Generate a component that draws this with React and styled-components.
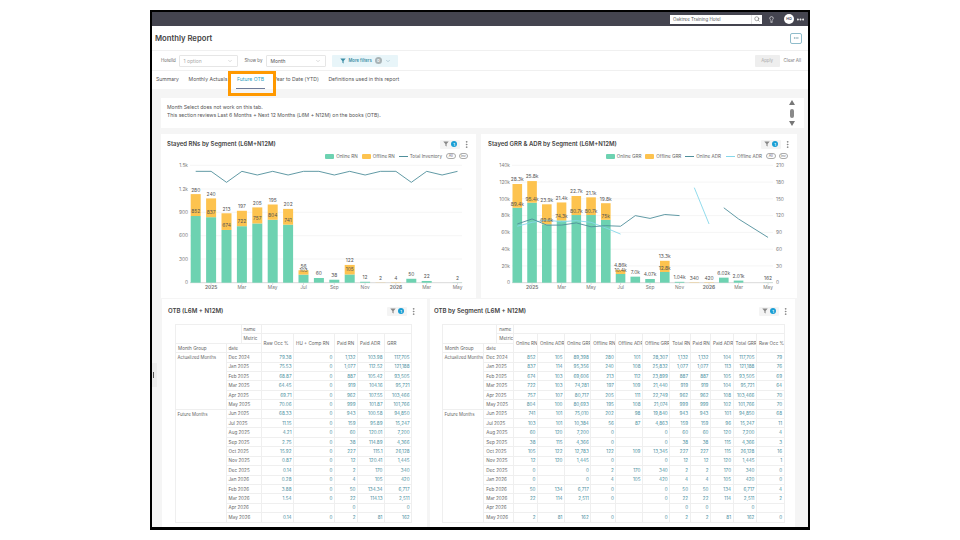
import styled, { createGlobalStyle } from "styled-components"
import { ChevronDown, Ellipsis, EllipsisVertical, Lightbulb, Search } from "lucide-react"

const GREEN = "#6dd2b1"
const ORANGE = "#fdc34f"
const DARK_LINE = "#4f8f9b"
const LIGHT_LINE = "#86d7ea"

const GlobalStyle = createGlobalStyle`
  html, body { margin: 0; padding: 0; background: #fff; }
  body { font-family: Inter, "Liberation Sans", sans-serif; color: #555; }
`
const Page = styled.div`
  width: 960px;
  height: 540px;
  box-sizing: border-box;
  padding: 10px 150px 0;
  overflow: hidden;
  background: #fff;
`
const Frame = styled.div`
  position: relative;
  width: 660px;
  height: 520px;
  box-sizing: border-box;
  border: 2px solid #000;
  border-bottom-width: 3px;
  overflow: hidden;
  display: flex;
  flex-direction: column;
  background: #fff;
`
const TopBar = styled.div`
  height: 14px;
  flex: none;
  background: #44444f;
  display: flex;
  align-items: center;
  justify-content: flex-end;
  padding-right: 3px;
  color: #fff;
`
const SearchBox = styled.div`
  width: 92px;
  height: 9px;
  box-sizing: border-box;
  background: #fff;
  display: flex;
  align-items: center;
  justify-content: space-between;
  padding-left: 3px;
  font-size: 4.5px;
  color: #555;
  margin-right: 6px;
`
const SearchIconCell = styled.div`
  width: 10px;
  height: 9px;
  border-left: 1px solid #e4e4e4;
  display: flex;
  align-items: center;
  justify-content: center;
`
const Avatar = styled.div`
  width: 10px;
  height: 10px;
  border-radius: 50%;
  background: #fff;
  color: #44444f;
  font-size: 3.6px;
  font-weight: 600;
  display: flex;
  align-items: center;
  justify-content: center;
  margin: 0 2px 0 9px;
`
const TitleRow = styled.div`
  height: 24px;
  flex: none;
  display: flex;
  align-items: center;
  justify-content: space-between;
  padding: 0 6px 0 3px;
  border-bottom: 1px solid #f0f0f0;
`
const PageTitle = styled.div`
  font-size: 7.7px;
  font-weight: 600;
  color: #444;
`
const SquareButton = styled.div`
  width: 12px;
  height: 11px;
  box-sizing: border-box;
  border: 1px solid #8fbccb;
  border-radius: 2px;
  display: flex;
  align-items: center;
  justify-content: center;
  color: #5d8d9b;
`
const FilterRow = styled.div`
  height: 19px;
  flex: none;
  display: flex;
  align-items: center;
  padding: 0 7px 0 9px;
  border-bottom: 1px solid #f0f0f0;
  font-size: 4.4px;
  color: #666;
`
const FilterLabel = styled.span`
  width: ${(p) => p.$width}px;
  flex: none;
`
const SelectBox = styled.div`
  width: ${(p) => p.$width}px;
  height: 12px;
  box-sizing: border-box;
  border: 1px solid #e6e6e6;
  border-radius: 1px;
  display: flex;
  align-items: center;
  justify-content: space-between;
  padding: 0 4px;
  margin-right: ${(p) => p.$gap}px;
  font-size: 5px;
  color: ${(p) => (p.$muted ? "#aaa" : "#555")};
`
const MoreFilters = styled.div`
  width: 66px;
  height: 12px;
  box-sizing: border-box;
  background: #e8f5f9;
  border-radius: 1px;
  display: flex;
  align-items: center;
  gap: 3px;
  padding-left: 8px;
  font-size: 4.2px;
  font-weight: 600;
  color: #3b8da5;
`
const ZeroBadge = styled.span`
  width: 7px;
  height: 7px;
  border-radius: 50%;
  background: #a9b3b6;
  color: #fff;
  font-size: 4px;
  display: flex;
  align-items: center;
  justify-content: center;
`
const ApplyButton = styled.div`
  margin-left: auto;
  width: 25px;
  height: 12px;
  background: #eee;
  border-radius: 1px;
  display: flex;
  align-items: center;
  justify-content: center;
  color: #aaa;
`
const ClearAll = styled.span`
  margin-left: 4px;
  color: #777;
`
const TabBar = styled.div`
  position: relative;
  z-index: 2;
  height: 18px;
  flex: none;
  display: flex;
  align-items: center;
  gap: 9.6px;
  padding-left: 4px;
  font-size: 5.1px;
  color: #555;
`
const Tab = styled.div`
  position: relative;
  height: 18px;
  line-height: 17px;
  color: ${(p) => (p.$active ? "#2e9fc0" : "#555")};
`
const TabUnderline = styled.div`
  position: absolute;
  left: -1px;
  right: -1px;
  bottom: 0;
  height: 1px;
  background: #6d7a98;
`
const Highlight = styled.div`
  position: absolute;
  left: 76px;
  top: 0;
  width: 48px;
  height: 25px;
  box-sizing: border-box;
  border: 3px solid #f90;
`
const Content = styled.div`
  flex: 1;
  min-height: 0;
  background: #f5f5f5;
  padding: 9px 11px 0 9px;
  position: relative;
`
const InfoCard = styled.div`
  height: 30px;
  box-sizing: border-box;
  background: #fff;
  margin-right: -7px;
  padding: 5px 6px;
  font-size: 5.1px;
  line-height: 8px;
  color: #555;
  display: flex;
  justify-content: space-between;
`
const ScrollTrack = styled.div`
  width: 6px;
  height: 26px;
  margin: -3px 3px 0 0;
  display: flex;
  flex-direction: column;
  align-items: center;
  justify-content: space-between;
`
const ScrollThumb = styled.div`
  width: 4px;
  height: 9px;
  border-radius: 2px;
  background: #8a8a8a;
`
const ChartRow = styled.div`
  display: grid;
  grid-template-columns: 315px 316px;
  gap: 5px;
  margin-top: 6px;
`
const Card = styled.div`
  background: #fff;
  overflow: hidden;
`
const CardHead = styled.div`
  height: ${(p) => p.$height}px;
  display: flex;
  align-items: center;
  justify-content: space-between;
  padding: 0 ${(p) => p.$right}px 0 ${(p) => p.$left}px;
  box-sizing: border-box;
`
const CardTitle = styled.div`
  font-size: ${(p) => p.$size}px;
  font-weight: 600;
  color: #444;
`
const CardTools = styled.div`
  display: flex;
  align-items: center;
  gap: 2px;
  margin-top: 2px;
  color: #777;
`
const FilterChip = styled.div`
  width: 20px;
  height: 9px;
  background: #f4f4f4;
  border-radius: 1px;
  display: flex;
  align-items: center;
  justify-content: center;
  gap: 2px;
`
const CountBadge = styled.span`
  width: 6px;
  height: 6px;
  border-radius: 50%;
  background: #1a9ed4;
  color: #fff;
  font-size: 4px;
  font-weight: 600;
  display: flex;
  align-items: center;
  justify-content: center;
`
const Legend = styled.div`
  height: 8px;
  display: flex;
  align-items: center;
  justify-content: flex-end;
  padding-right: ${(p) => p.$right}px;
  font-size: 4.6px;
  color: #666;
`
const LegendItem = styled.div`
  display: flex;
  align-items: center;
  gap: 2px;
  margin-right: ${(p) => p.$gap}px;
`
const Swatch = styled.span`
  width: 9px;
  height: 5px;
  border-radius: 1px;
  background: ${(p) => p.$color};
`
const LineMark = styled.span`
  width: 9px;
  height: 1px;
  background: ${(p) => p.$color};
`
const Pill = styled.span`
  width: 9.5px;
  height: 6px;
  box-sizing: border-box;
  border: 0.6px solid #aaa;
  border-radius: 4px;
  margin-left: 3px;
  font-size: 3.6px;
  display: flex;
  align-items: center;
  justify-content: center;
`
const ChartSvg = styled.svg`
  display: block;
  width: ${(p) => p.$width}px;
  height: 138px;
`
const AxisText = styled.text`
  font-size: 4.8px;
  fill: #777;
  font-weight: ${(p) => (p.$bold ? 700 : 400)};
`
const BarLabel = styled.text`
  font-size: 4.9px;
  fill: #555;
  text-anchor: middle;
`
const TableRow = styled.div`
  display: grid;
  grid-template-columns: 265px 365px;
  gap: 3px;
  margin: 1px 0 0 1px;
`
const TableCard = styled(Card)`
  height: 232px;
`
const TableWrap = styled.div`
  margin: 3px 0 0 ${(p) => p.$left}px;
`
const DataTable = styled.table`
  table-layout: fixed;
  border-collapse: collapse;
  width: ${(p) => p.$width}px;
  font-size: 4.6px;
  color: #666;
  td, th {
    height: 9.41px;
    padding: 0 1.5px 0 2px;
    border: 1px solid #efefef;
    box-sizing: border-box;
    line-height: 5px;
    font-weight: 400;
    text-align: left;
    white-space: nowrap;
    overflow: hidden;
  }
`
const GroupCell = styled.td`
  && {
    vertical-align: top;
    padding: 2px 0 0 1.5px;
    font-size: 4.4px;
  }
`
const ValueCell = styled.td`
  && {
    text-align: right;
    color: #4a8fa0;
  }
`
const Handle = styled.div`
  position: absolute;
  left: 0;
  top: 274px;
  width: 5px;
  height: 24px;
  background: #ececec;
  display: flex;
  align-items: center;
`
const HandleTick = styled.span`
  width: 1px;
  height: 6px;
  margin-left: 1px;
  background: #555;
`

const rnX = (i) => 195.7 + 15.4 * i
const grrX = (i) => 517.3 + 14.75 * i
const rnY = (v) => 282.7 - (v / 300) * 23.48
const grrY = (v) => 282.7 - (v / 20000) * 16.77
const adrY = (v) => 282.7 - (v / 30) * 16.77

const rnOnline = [852, 837, 674, 722, 757, 804, 741, 103, 60, 38, 105, 12, 0, 0, 50, 22, null, 2]
const rnOffline = [280, 240, 213, 197, 205, 195, 202, 56, 0, 0, 122, 0, 2, 4, 0, 0, 0, 0]
const inventory = [118, 118, 151, 118, 129, 118, 129, 118, 118, 129, 118, 129, 118, 118, 151, 118, 129, 118]

const grrOnline = [89400, 95400, 69600, 74300, 80700, 80700, 75000, 10400, 7200, 4400, 12800, 1040, 0, 0, 6020, 2510, 0, 162]
const grrOffline = [28300, 25800, 23900, 21400, 22700, 21100, 19800, 4860, 0, 0, 13300, 0, 340, 420, 0, 0, 0, 0]
const grrOnLabel = ["89.4k", "95.4k", "69.6k", "74.3k", "80.7k", "80.7k", "75k", "10.4k", "7.0k", "4.07k", "12.8k", "1.04k", "", "", "6.02k", "2.01k", "", "162"]
const grrOffLabel = ["28.3k", "25.8k", "23.9k", "21.4k", "22.7k", "21.1k", "19.8k", "4.86k", "", "", "13.3k", "", "340", "420", "", "", "", ""]

const monthTicks = [
  [1, "2025", true], [3, "Mar"], [5, "May"], [7, "Jul"], [9, "Sep"],
  [11, "Nov"], [13, "2026", true], [15, "Mar"], [17, "May"],
]

const points = (pairs) => pairs.map(([x, y]) => `${x},${y}`).join(" ")

const Axis = ({ x0, x1, xOf, yTicks }) => (
  <>
    {yTicks.map(([y, label]) => (
      <g key={label}>
        <line x1={x0} x2={x1} y1={y} y2={y} stroke={label === "0" ? "#d9d9d9" : "#f3f3f3"} strokeWidth={label === "0" ? 1 : 0.8} />
        <AxisText x={x0 - 2} y={y + 1.7} textAnchor="end">{label}</AxisText>
      </g>
    ))}
    {monthTicks.map(([i, label, bold]) => (
      <g key={i}>
        <line x1={xOf(i)} x2={xOf(i)} y1={283} y2={285} stroke="#ccc" strokeWidth="0.6" />
        <AxisText x={xOf(i)} y={289} textAnchor="middle" $bold={bold}>{label}</AxisText>
      </g>
    ))}
  </>
)

const RnChart = () => (
  <ChartSvg $width={315} viewBox="161 160 315 138">
    <Axis
      x0={190}
      x1={462}
      xOf={rnX}
      yTicks={[[165.3, "1.5k"], [189, "1.2k"], [212.3, "900"], [235.7, "600"], [259, "300"], [282.7, "0"]]}
    />
    {rnOnline.map((v, i) => (
      <g key={i}>
        <rect x={rnX(i) - 5} y={rnY(v)} width="10" height={282.7 - rnY(v)} fill={GREEN} />
        <rect x={rnX(i) - 5} y={rnY(v + rnOffline[i])} width="10" height={rnY(v) - rnY(v + rnOffline[i])} fill={ORANGE} />
      </g>
    ))}
    {rnOnline.map((v, i) => {
      const off = rnOffline[i]
      const top = rnY(v + off)
      if (v === null) return null
      return (
        <g key={i}>
          {off > 0 && v > 0 && <BarLabel x={rnX(i)} y={rnY(v) - 3}>{v}</BarLabel>}
          <BarLabel x={rnX(i)} y={top - 2.6}>{off > 0 ? off : v}</BarLabel>
        </g>
      )
    })}
    <polyline
      points={points(inventory.map((y, i) => [rnX(i), 132 + y / 3]))}
      fill="none"
      stroke={DARK_LINE}
      strokeWidth="0.9"
    />
  </ChartSvg>
)

const GrrChart = () => (
  <ChartSvg $width={316} viewBox="481 160 316 138">
    <Axis
      x0={512}
      x1={773}
      xOf={grrX}
      yTicks={[
        [165.3, "140k"], [182.1, "120k"], [198.8, "100k"], [215.6, "80k"],
        [232.4, "60k"], [249.2, "40k"], [265.9, "20k"], [282.7, "0"],
      ]}
    />
    {[[165.3, 210], [182.1, 180], [198.8, 150], [215.6, 120], [232.4, 90], [249.2, 60], [265.9, 30], [282.7, 0]].map(([y, label]) => (
      <AxisText key={label} x={776} y={y + 1.7}>{label}</AxisText>
    ))}
    {grrOnline.map((v, i) => (
      <g key={i}>
        <rect x={grrX(i) - 4.8} y={grrY(v)} width="9.6" height={282.7 - grrY(v)} fill={GREEN} />
        <rect x={grrX(i) - 4.8} y={grrY(v + grrOffline[i])} width="9.6" height={grrY(v) - grrY(v + grrOffline[i])} fill={ORANGE} />
      </g>
    ))}
    <polyline
      points={points([101, 108, 112, 109, 111, 108, 98, 87].map((v, i) => [grrX(i), adrY(v)]))}
      fill="none"
      stroke={LIGHT_LINE}
      strokeWidth="0.9"
    />
    <polyline points={points([[grrX(12), adrY(170)], [grrX(13), adrY(105)]])} fill="none" stroke={LIGHT_LINE} strokeWidth="0.9" />
    <polyline
      points={points([105, 114, 103, 103, 107, 100, 102, 101, 120, 115, 122, 120].map((v, i) => [grrX(i), adrY(v)]))}
      fill="none"
      stroke={DARK_LINE}
      strokeWidth="0.9"
    />
    <polyline
      points={points([[grrX(14), adrY(134)], [grrX(15), adrY(114)], [grrX(17), adrY(81)]])}
      fill="none"
      stroke={DARK_LINE}
      strokeWidth="0.9"
    />
    {grrOnline.map((v, i) => {
      const off = grrOffline[i]
      const top = grrY(v + off)
      return (
        <g key={i}>
          {off > 0 && v > 0 && <BarLabel x={grrX(i)} y={grrY(v) - 2}>{grrOnLabel[i]}</BarLabel>}
          <BarLabel x={grrX(i)} y={top - 2.6}>{off > 0 ? grrOffLabel[i] : grrOnLabel[i]}</BarLabel>
        </g>
      )
    })}
  </ChartSvg>
)

const months = [
  "Dec 2024", "Jan 2025", "Feb 2025", "Mar 2025", "Apr 2025", "May 2025", "Jun 2025", "Jul 2025", "Aug 2025",
  "Sep 2025", "Oct 2025", "Nov 2025", "Dec 2025", "Jan 2026", "Feb 2026", "Mar 2026", "Apr 2026", "May 2026",
]

const otbColumns = ["Raw Occ %", "HU + Comp RN", "Paid RN", "Paid ADR", "GRR"]
const otbWidths = [50.5, 15, 20, 32.5, 41, 23, 27, 27]
const otbRows = [
  ["79.38", "0", "1,132", "103.98", "117,705"],
  ["75.53", "0", "1,077", "112.52", "121,188"],
  ["68.87", "0", "887", "105.42", "93,505"],
  ["64.45", "0", "919", "104.16", "95,721"],
  ["69.71", "0", "962", "107.55", "103,466"],
  ["70.06", "0", "999", "101.87", "101,766"],
  ["68.33", "0", "943", "100.58", "94,850"],
  ["11.15", "0", "159", "95.89", "15,247"],
  ["4.21", "0", "60", "120.01", "7,200"],
  ["2.75", "0", "38", "114.89", "4,366"],
  ["15.92", "0", "227", "115.1", "26,128"],
  ["0.87", "0", "12", "120.41", "1,445"],
  ["0.14", "0", "2", "170", "340"],
  ["0.28", "0", "4", "105", "420"],
  ["3.88", "0", "50", "134.34", "6,717"],
  ["1.54", "0", "22", "114.13", "2,511"],
  ["", "", "0", "", "0"],
  ["0.14", "0", "2", "81", "162"],
]

const segColumns = [
  "Online RN", "Online ADR", "Online GRR", "Offline RN", "Offline ADR", "Offline GRR",
  "Total RN", "Paid RN", "Paid ADR", "Total GRR", "Raw Occ %",
]
const segWidths = [41.3, 13, 16.7, 24, 27, 26.3, 25, 26.7, 27.3, 20.3, 20.4, 22.6, 23.4, 27.6]
const segRows = [
  ["852", "105", "89,398", "280", "101", "28,307", "1,132", "1,132", "104", "117,705", "79"],
  ["837", "114", "95,356", "240", "108", "25,832", "1,077", "1,077", "113", "121,188", "76"],
  ["674", "103", "69,606", "213", "112", "23,899", "887", "887", "105", "93,505", "69"],
  ["722", "103", "74,281", "197", "109", "21,440", "919", "919", "104", "95,721", "64"],
  ["757", "107", "80,717", "205", "111", "22,749", "962", "962", "108", "103,466", "70"],
  ["804", "100", "80,693", "195", "108", "21,074", "999", "999", "102", "101,766", "70"],
  ["741", "101", "75,010", "202", "98", "19,840", "943", "943", "101", "94,850", "68"],
  ["103", "101", "10,384", "56", "87", "4,863", "159", "159", "96", "15,247", "11"],
  ["60", "120", "7,200", "0", "", "0", "60", "60", "120", "7,200", "4"],
  ["38", "115", "4,366", "0", "", "0", "38", "38", "115", "4,366", "3"],
  ["105", "122", "12,783", "122", "109", "13,345", "227", "227", "115", "26,128", "16"],
  ["12", "120", "1,445", "0", "", "0", "12", "12", "120", "1,445", "1"],
  ["0", "", "0", "2", "170", "340", "2", "2", "170", "340", "0"],
  ["0", "", "0", "4", "105", "420", "4", "4", "105", "420", "0"],
  ["50", "134", "6,717", "0", "", "0", "50", "50", "134", "6,717", "4"],
  ["22", "114", "2,511", "0", "", "0", "22", "22", "114", "2,511", "2"],
  ["", "", "", "", "", "", "0", "0", "", "0", ""],
  ["2", "81", "162", "0", "", "0", "2", "2", "81", "162", "0"],
]

const PivotTable = ({ columns, widths, rows }) => {
  const total = widths.reduce((a, b) => a + b, 0)
  return (
    <DataTable $width={total}>
      <colgroup>
        {widths.map((w, i) => (
          <col key={i} width={w} />
        ))}
      </colgroup>
      <thead>
        <tr>
          <th colSpan={2} rowSpan={2}></th>
          <th>name</th>
          <th colSpan={columns.length}></th>
        </tr>
        <tr>
          <th>Metric</th>
          {columns.map((c) => (
            <th key={c} rowSpan={2}>{c}</th>
          ))}
        </tr>
        <tr>
          <th>Month Group</th>
          <th colSpan={2}>date</th>
        </tr>
      </thead>
      <tbody>
        {rows.map((row, i) => (
          <tr key={months[i]}>
            {i === 0 && <GroupCell rowSpan={6}>Actualized Months</GroupCell>}
            {i === 6 && <GroupCell rowSpan={12}>Future Months</GroupCell>}
            <td colSpan={2}>{months[i]}</td>
            {row.map((v, j) => (
              <ValueCell key={j}>{v}</ValueCell>
            ))}
          </tr>
        ))}
      </tbody>
    </DataTable>
  )
}

const FunnelIcon = ({ size = 6, color = "#888" }) => (
  <svg width={size} height={size} viewBox="0 0 10 10">
    <path d="M0.5 1h9L6 5.2V9L4 8V5.2z" fill={color} />
  </svg>
)

const Tools = () => (
  <CardTools>
    <FilterChip>
      <FunnelIcon />
      <CountBadge>1</CountBadge>
    </FilterChip>
    <EllipsisVertical size={9} strokeWidth={2} />
  </CardTools>
)

export default function App() {
  return (
    <Page>
      <GlobalStyle />
      <Frame>
        <TopBar>
          <SearchBox>
            Oaktree Training Hotel
            <SearchIconCell>
              <Search size={6} color="#555" />
            </SearchIconCell>
          </SearchBox>
          <Lightbulb size={7} color="#fff" />
          <Avatar>HO</Avatar>
          <Ellipsis size={9} strokeWidth={3} />
        </TopBar>
        <TitleRow>
          <PageTitle>Monthly Report</PageTitle>
          <SquareButton>
            <Ellipsis size={6} />
          </SquareButton>
        </TitleRow>
        <FilterRow>
          <FilterLabel $width={17.5}>HotelId</FilterLabel>
          <SelectBox $width={59} $gap={7} $muted>
            1 option
            <ChevronDown size={6} color="#bbb" />
          </SelectBox>
          <FilterLabel $width={21}>Show by</FilterLabel>
          <SelectBox $width={60.5} $gap={5.5}>
            Month
            <ChevronDown size={6} color="#bbb" />
          </SelectBox>
          <MoreFilters>
            <FunnelIcon color="#3b8da5" />
            More filters
            <ZeroBadge>0</ZeroBadge>
            <ChevronDown size={6} color="#8ab" />
          </MoreFilters>
          <ApplyButton>Apply</ApplyButton>
          <ClearAll>Clear All</ClearAll>
        </FilterRow>
        <TabBar>
          <Tab>Summary</Tab>
          <Tab>Monthly Actuals</Tab>
          <Tab $active>
            Future OTB
            <TabUnderline />
          </Tab>
          <Tab>Year to Date (YTD)</Tab>
          <Tab>Definitions used in this report</Tab>
          <Highlight />
        </TabBar>
        <Content>
          <InfoCard>
            <div>
              Month Select does not work on this tab.
              <br />
              This section reviews Last 6 Months + Next 12 Months (L6M + N12M) on the books (OTB).
            </div>
            <ScrollTrack>
              <svg width="6" height="5" viewBox="0 0 6 5"><path d="M3 0l3 5H0z" fill="#777" /></svg>
              <ScrollThumb />
              <svg width="6" height="5" viewBox="0 0 6 5"><path d="M0 0h6L3 5z" fill="#777" /></svg>
            </ScrollTrack>
          </InfoCard>
          <ChartRow>
            <Card>
              <CardHead $height={18} $left={6} $right={5}>
                <CardTitle $size={6}>Stayed RNs by Segment (L6M+N12M)</CardTitle>
                <Tools />
              </CardHead>
              <Legend $right={8}>
                <LegendItem $gap={4}><Swatch $color={GREEN} />Online RN</LegendItem>
                <LegendItem $gap={4}><Swatch $color={ORANGE} />Offline RN</LegendItem>
                <LegendItem $gap={1}><LineMark $color={DARK_LINE} />Total Inventory</LegendItem>
                <Pill>All</Pill>
                <Pill>Inv</Pill>
              </Legend>
              <RnChart />
            </Card>
            <Card>
              <CardHead $height={18} $left={7} $right={5}>
                <CardTitle $size={6}>Stayed GRR &amp; ADR by Segment (L6M+N12M)</CardTitle>
                <Tools />
              </CardHead>
              <Legend $right={9}>
                <LegendItem $gap={4}><Swatch $color={GREEN} />Online GRR</LegendItem>
                <LegendItem $gap={4}><Swatch $color={ORANGE} />Offline GRR</LegendItem>
                <LegendItem $gap={5}><LineMark $color={DARK_LINE} />Online ADR</LegendItem>
                <LegendItem $gap={1}><LineMark $color={LIGHT_LINE} />Offline ADR</LegendItem>
                <Pill>All</Pill>
                <Pill>Inv</Pill>
              </Legend>
              <GrrChart />
            </Card>
          </ChartRow>
          <TableRow>
            <TableCard>
              <CardHead $height={22} $left={6} $right={9}>
                <CardTitle $size={6.1}>OTB (L6M + N12M)</CardTitle>
                <Tools />
              </CardHead>
              <TableWrap $left={13}>
                <PivotTable columns={otbColumns} widths={otbWidths} rows={otbRows} />
              </TableWrap>
            </TableCard>
            <TableCard>
              <CardHead $height={22} $left={4} $right={5}>
                <CardTitle $size={6.1}>OTB by Segment (L6M + N12M)</CardTitle>
                <Tools />
              </CardHead>
              <TableWrap $left={12}>
                <PivotTable columns={segColumns} widths={segWidths} rows={segRows} />
              </TableWrap>
            </TableCard>
          </TableRow>
          <Handle><HandleTick /></Handle>
        </Content>
      </Frame>
    </Page>
  )
}
